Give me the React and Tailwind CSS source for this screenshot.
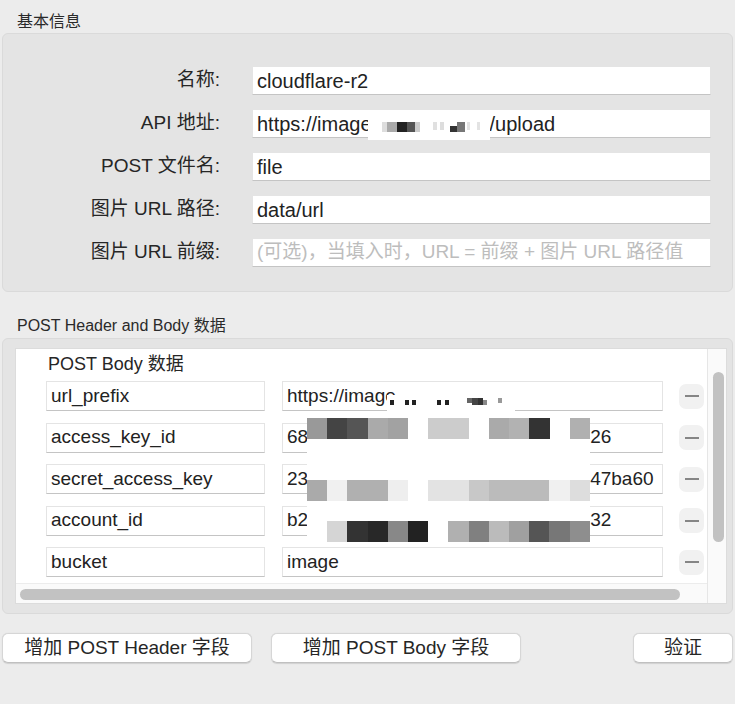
import React from 'react';

const font = "font-['Liberation_Sans','Noto_Sans_CJK_SC',sans-serif]";

const mosaicRows = [
  { top: 5, cells: { 0: '#999', 1: '#444', 2: '#555', 3: '#aaa', 4: '#a2a2a2', 6: '#ccc', 7: '#ccc', 9: '#aaa', 10: '#b2b2b2', 11: '#333', 13: '#b0b0b0' } },
  { top: 67, cells: { 0: '#aaa', 1: '#f0f0f0', 2: '#b0b0b0', 3: '#b0b0b0', 4: '#eee', 6: '#e3e3e3', 7: '#e3e3e3', 8: '#c8c8c8', 9: '#bbb', 10: '#bbb', 11: '#bbb', 12: '#f0f0f0', 13: '#ddd' } },
  { top: 108, cells: { 1: '#d5d5d5', 2: '#333', 3: '#282828', 4: '#888', 5: '#222', 7: '#b0b0b0', 8: '#808080', 9: '#bbb', 10: '#a0a0a0', 11: '#555', 12: '#777', 13: '#8e8e8e' } },
];

// small dots over the censored url parts: [left, top, width, height, colour]
const urlDots = [
  [3, 5, 4, 5, '#222'], [18, 5, 4, 5, '#222'], [25, 5, 4, 5, '#222'],
  [50, 5, 4, 5, '#222'], [58, 5, 4, 5, '#222'],
  [80, 3, 5, 5, '#666'], [85, 3, 6, 7, '#444'], [91, 3, 5, 7, '#333'], [96, 5, 4, 5, '#888'], [111, 3, 4, 5, '#999'],
];

const apiDots = [
  [14, 11, 5, 10, '#ddd'], [19, 11, 10, 10, '#aaa'], [29, 11, 10, 10, '#222'], [39, 11, 8, 10, '#555'], [47, 11, 5, 10, '#ccc'],
  [65, 11, 4, 8, '#e0e0e0'], [72, 11, 4, 8, '#ddd'], [82, 15, 7, 6, '#333'], [89, 11, 8, 10, '#777'],
  [99, 11, 3, 8, '#e3e3e3'], [109, 11, 3, 8, '#e3e3e3'],
];

function Field({ children, className = '' }) {
  return (
    <div className={`flex items-center bg-white border border-[#e4e4e4] border-b-[#c4c4c4] pl-[4px] text-[#222] whitespace-nowrap overflow-hidden ${className}`}>
      {children}
    </div>
  );
}

function FormRow({ label, children }) {
  return (
    <div className="flex items-center">
      <div className="w-[218px] text-right text-[19px] text-[#262626] pr-[1px]">{label}</div>
      <div className="ml-[31px] w-[459px] relative">{children}</div>
    </div>
  );
}

function MinusButton() {
  return (
    <div className="w-[25px] h-[25px] rounded-[7px] bg-[#f1f1f1] flex items-center justify-center shrink-0">
      <div className="w-[14px] h-[2px] bg-[#858585]" />
    </div>
  );
}

function BodyRow({ name, children }) {
  return (
    <div className="flex items-center">
      <Field className="w-[219px] h-[30px] text-[19px]">{name}</Field>
      <Field className="ml-[17px] w-[381px] h-[30px] text-[19px]">{children}</Field>
      <div className="ml-[16px]"><MinusButton /></div>
    </div>
  );
}

function Split({ head, tail, gap }) {
  return (
    <>
      <span>{head}</span>
      <span className="inline-block shrink-0" style={{ width: gap }} />
      <span>{tail}</span>
    </>
  );
}

export default function App() {
  return (
    <div className={`w-[735px] h-[704px] bg-[#ececec] overflow-hidden ${font}`}>
      <div className="pl-[17px] pt-[12px] text-[16px] leading-[20px] text-[#2a2a2a]">基本信息</div>

      <div className="mt-[1px] mx-[2px] h-[259px] rounded-[6px] bg-[#e4e4e4] border border-[#dadada] pt-[32px] flex flex-col gap-[14px]">
        <FormRow label="名称:">
          <Field className="h-[29px] text-[20px]">cloudflare-r2</Field>
        </FormRow>
        <FormRow label="API 地址:">
          <Field className="h-[29px] text-[20px]">
            <Split head="https://image" tail="/upload" gap={118} />
          </Field>
          <div className="absolute left-[116px] top-[2px] w-[122px] h-[29px] bg-white">
            {apiDots.map(([l, t, w, h, c], i) => (
              <div key={i} className="absolute" style={{ left: l, top: t, width: w, height: h, background: c }} />
            ))}
          </div>
        </FormRow>
        <FormRow label="POST 文件名:">
          <Field className="h-[29px] text-[20px]">file</Field>
        </FormRow>
        <FormRow label="图片 URL 路径:">
          <Field className="h-[29px] text-[20px]">data/url</Field>
        </FormRow>
        <FormRow label="图片 URL 前缀:">
          <Field className="h-[29px] text-[19px]">
            <span className="text-[#bdbdbd]">(可选)，当填入时，URL = 前缀 + 图片 URL 路径值</span>
          </Field>
        </FormRow>
      </div>

      <div className="mt-[24px] pl-[17px] text-[16px] leading-[20px] text-[#2a2a2a]">POST Header and Body 数据</div>

      <div className="mt-[2px] mx-[2px] h-[276px] rounded-[6px] bg-[#e4e4e4] border border-[#dadada] pt-[9px] pl-[12px] pr-[5px]">
        <div className="w-[712px] h-[256px] bg-white border border-[#dcdcdc] flex">
          <div className="w-[691px] flex flex-col">
            <div className="relative h-[234px] overflow-hidden pl-[30px] pt-[4px]">
              <div className="pl-[2px] text-[18px] leading-[22px] text-[#262626] mb-[6px]">POST Body 数据</div>
              <div className="flex flex-col gap-[11.5px]">
                <BodyRow name="url_prefix">https://image</BodyRow>
                <BodyRow name="access_key_id"><Split head="68" tail="26" gap={282} /></BodyRow>
                <BodyRow name="secret_access_key"><Split head="23" tail="47ba60" gap={282} /></BodyRow>
                <BodyRow name="account_id"><Split head="b2" tail="32" gap={282} /></BodyRow>
                <BodyRow name="bucket">image</BodyRow>
              </div>

              <div className="absolute left-[371px] top-[46px] w-[128px] h-[18px] bg-white">
                {urlDots.map(([l, t, w, h, c], i) => (
                  <div key={i} className="absolute" style={{ left: l, top: t, width: w, height: h, background: c }} />
                ))}
              </div>
              <div className="absolute left-[291px] top-[64px] w-[283px] h-[128px] bg-white">
                {mosaicRows.map((row, r) =>
                  Object.entries(row.cells).map(([idx, c]) => (
                    <div
                      key={`${r}-${idx}`}
                      className="absolute h-[21px]"
                      style={{ left: Number(idx) * 20.2, top: row.top, width: 20.4, background: c }}
                    />
                  ))
                )}
              </div>
            </div>
            <div className="h-[20px] bg-[#fafafa] border-t border-[#ececec] pt-[5px] pl-[4px]">
              <div className="w-[660px] h-[11px] rounded-full bg-[#c2c2c2]" />
            </div>
          </div>
          <div className="w-[19px] bg-[#fafafa] border-l border-[#e6e6e6] pt-[23px] pl-[5px]">
            <div className="w-[11px] h-[170px] rounded-full bg-[#c2c2c2]" />
          </div>
        </div>
      </div>

      <div className="mt-[19px] flex items-center">
        <button className="ml-[2px] w-[250px] h-[30px] rounded-[6px] bg-white border border-[#d6d6d6] border-b-[#c0c0c0] text-[19px] text-[#262626] shadow-[0_0.5px_1px_rgba(0,0,0,0.12)]">
          增加 POST Header 字段
        </button>
        <button className="ml-[19px] w-[250px] h-[30px] rounded-[6px] bg-white border border-[#d6d6d6] border-b-[#c0c0c0] text-[19px] text-[#262626] shadow-[0_0.5px_1px_rgba(0,0,0,0.12)]">
          增加 POST Body 字段
        </button>
        <button className="ml-[112px] w-[100px] h-[30px] rounded-[6px] bg-white border border-[#d6d6d6] border-b-[#c0c0c0] text-[19px] text-[#262626] shadow-[0_0.5px_1px_rgba(0,0,0,0.12)]">
          验证
        </button>
      </div>
    </div>
  );
}
